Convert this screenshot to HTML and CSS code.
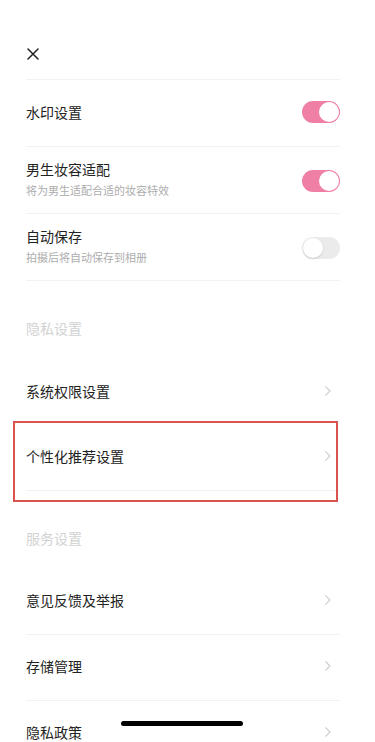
FILE: index.html
```html
<!DOCTYPE html>
<html lang="zh-CN">

<head>
    <meta charset="UTF-8">
    <meta name="viewport" content="width=device-width, initial-scale=1.0">
    <title>设置</title>
    <link rel="stylesheet" href="styles.css">
</head>

<body>
    <div class="page">
        <div class="top-bar">
            <svg class="close-icon" width="12" height="12" viewBox="0 0 12 12">
                <path d="M1 1 L11 11 M11 1 L1 11" stroke="#222" stroke-width="1.5" stroke-linecap="round" fill="none" />
            </svg>
        </div>

        <!-- 拍摄设置 -->
        <div class="row">
            <div class="row-text">
                <div class="row-title">水印设置</div>
            </div>
            <span class="switch on"></span>
        </div>
        <div class="row tall">
            <div class="row-text">
                <div class="row-title">男生妆容适配</div>
                <div class="row-sub">将为男生适配合适的妆容特效</div>
            </div>
            <span class="switch on"></span>
        </div>
        <div class="row tall">
            <div class="row-text">
                <div class="row-title">自动保存</div>
                <div class="row-sub">拍摄后将自动保存到相册</div>
            </div>
            <span class="switch"></span>
        </div>

        <!-- 隐私设置 -->
        <div class="section-title">隐私设置</div>
        <div class="row link no-line">
            <div class="row-title">系统权限设置</div>
            <svg class="chevron" width="8" height="12" viewBox="0 0 8 12">
                <path d="M1.5 1.5 L6 6 L1.5 10.5" stroke="#cfcfcf" stroke-width="1.2" fill="none" />
            </svg>
        </div>
        <div class="row link marked">
            <div class="row-title">个性化推荐设置</div>
            <svg class="chevron" width="8" height="12" viewBox="0 0 8 12">
                <path d="M1.5 1.5 L6 6 L1.5 10.5" stroke="#cfcfcf" stroke-width="1.2" fill="none" />
            </svg>
        </div>

        <!-- 服务设置 -->
        <div class="section-title">服务设置</div>
        <div class="row link">
            <div class="row-title">意见反馈及举报</div>
            <svg class="chevron" width="8" height="12" viewBox="0 0 8 12">
                <path d="M1.5 1.5 L6 6 L1.5 10.5" stroke="#cfcfcf" stroke-width="1.2" fill="none" />
            </svg>
        </div>
        <div class="row link">
            <div class="row-title">存储管理</div>
            <svg class="chevron" width="8" height="12" viewBox="0 0 8 12">
                <path d="M1.5 1.5 L6 6 L1.5 10.5" stroke="#cfcfcf" stroke-width="1.2" fill="none" />
            </svg>
        </div>
        <div class="row link">
            <div class="row-title">隐私政策</div>
            <svg class="chevron" width="8" height="12" viewBox="0 0 8 12">
                <path d="M1.5 1.5 L6 6 L1.5 10.5" stroke="#cfcfcf" stroke-width="1.2" fill="none" />
            </svg>
        </div>
    </div>

    <div class="home-bar"></div>
</body>

</html>
```

FILE: styles.css
```css
html,
body {
    margin: 0;
    height: 100%;
    overflow: hidden;
}

body {
    font-family: "Noto Sans CJK SC", "Noto Sans", sans-serif;
    background-color: #fff;
    color: #222;
}

.page {
    padding: 0 35px 0 26px;
}

.top-bar {
    height: 80px;
    box-sizing: border-box;
    padding-top: 48px;
    border-bottom: 1px solid #f2f2f2;
}

.close-icon {
    display: block;
    margin-left: 1px;
}

.row {
    display: flex;
    align-items: center;
    justify-content: space-between;
    height: 67px;
    box-sizing: border-box;
    padding-bottom: 3px;
    border-bottom: 1px solid #f2f2f2;
}

.row.link {
    height: 66px;
    padding-right: 8px;
}

.row.no-line {
    border-bottom: none;
}

.row-title {
    font-size: 14px;
    line-height: 20px;
    color: #222;
}

.row-sub {
    font-size: 11px;
    line-height: 16px;
    color: #adadad;
    margin-top: 3px;
}

.chevron {
    display: block;
}

.section-title {
    height: 78px;
    box-sizing: border-box;
    padding-top: 37px;
    font-size: 14px;
    line-height: 20px;
    color: #d2d2d2;
}

.switch {
    position: relative;
    width: 38px;
    height: 22px;
    border-radius: 11px;
    background-color: #ebebeb;
    flex-shrink: 0;
}

.row.tall .switch {
    margin-top: 5px;
}

.switch::after {
    content: "";
    position: absolute;
    top: 1px;
    left: 1px;
    width: 20px;
    height: 20px;
    border-radius: 50%;
    background: #fff;
    box-shadow: 0 1px 2px rgba(0, 0, 0, 0.15);
}

.switch.on {
    background-color: #ef7fa4;
}

.switch.on::after {
    left: auto;
    right: 1px;
    box-shadow: none;
}

.row.marked {
    position: relative;
}

/* annotation frame drawn over the row */
.row.marked::after {
    content: "";
    position: absolute;
    left: -13px;
    right: 2px;
    top: -4px;
    bottom: -12px;
    border: 2px solid #d9534f;
    pointer-events: none;
}

.home-bar {
    position: fixed;
    left: 121px;
    bottom: 16px;
    width: 122px;
    height: 5px;
    border-radius: 3px;
    background-color: #000;
}
```
